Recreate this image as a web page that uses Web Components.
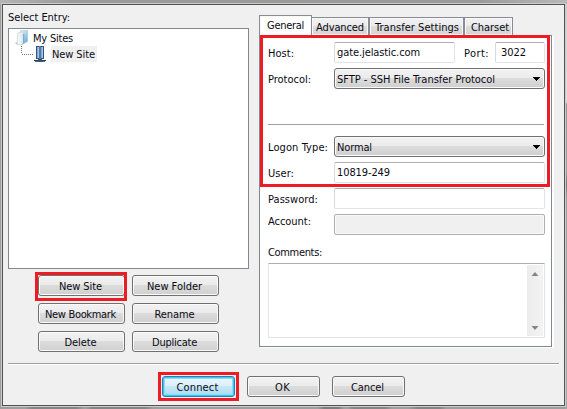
<!DOCTYPE html>
<html lang="en"><head><meta charset="utf-8"><title>Site Manager</title>
<style>
html,body{margin:0;height:100%;overflow:hidden}
body{font:11px/13px "DejaVu Sans Condensed","DejaVu Sans","Liberation Sans",sans-serif;font-stretch:condensed;color:#0a0a14}
</style></head><body>
<site-manager></site-manager>
<script>
const define=(name,html,init)=>{
  const tpl=document.createElement('template');tpl.innerHTML=html;
  customElements.define(name,class extends HTMLElement{
    connectedCallback(){
      if(this.shadowRoot)return;
      this.attachShadow({mode:'open'}).append(tpl.content.cloneNode(true));
      if(init)init.call(this,this.shadowRoot);
    }
  });
};

/* Text run whose tracking is tuned so that it fills the width given in "w". */
define('ui-text',`<style>:host{display:inline-block;white-space:nowrap;height:13px}span{display:inline-block}</style><span><slot></slot></span>`,
function(root){
  const s=root.querySelector('span'),w=+this.getAttribute('w'),n=this.textContent.length;
  const now=s.getBoundingClientRect().width;
  if(w&&now){s.style.letterSpacing=((w-now)/n)+'px';this.style.width=w+'px'}
});

define('ui-button',`<style>
:host{display:flex;box-sizing:border-box;position:relative;height:21px;border:1px solid #707070;border-radius:3px;justify-content:center;padding:4px 2px 0 0;
background:linear-gradient(#f2f2f2,#ebebeb 49%,#dcdcdc 50%,#cfcfcf);box-shadow:inset 0 0 0 1px #fafafa}
:host([primary]){border-color:#2d7fae;background:linear-gradient(#ecf6fc,#dceffa 49%,#c8e8f8 50%,#a9daf2);box-shadow:inset 0 0 0 1px #36c8f4,inset 0 0 0 2px #8bdcf6}
i{display:none}:host([marked]) i{display:block;position:absolute;border:3px solid #ed1c24;inset:-4px -3px -6px -4px;pointer-events:none}
:host([primary]) i{inset:-5px}
</style><slot></slot><i></i>`);

define('ui-input',`<style>
:host{display:block;box-sizing:border-box;height:21px;border:1px solid #e2e3ea;border-top-color:#abadb3;border-left-color:#d6dae2;border-radius:2px;background:#fff;padding:3px 0 0 2px}
:host([disabled]){background:#f0f0f0;border-color:#afafaf;box-shadow:inset 0 0 0 1px #fafafa}
</style><slot></slot>`);

define('ui-select',`<style>
:host{display:flex;justify-content:space-between;box-sizing:border-box;height:21px;border:1px solid #707070;border-radius:3px;padding:4px 4px 0 2px;
background:linear-gradient(#f2f2f2,#ebebeb 49%,#dcdcdc 50%,#cfcfcf);box-shadow:inset 0 0 0 1px #fafafa}
svg{display:block;margin-top:4px}
</style><slot></slot><svg width="7" height="4" shape-rendering="crispEdges"><path d="M0 0h7v1h-1v1h-1v1h-1v1h-1v-1h-1v-1h-1v-1h-1z" fill="#000"/></svg>`);

define('ui-rule',`<style>:host{display:block;height:1px;background:#a0a0a0;border-bottom:1px solid #fff}</style>`);

define('site-tree',`<style>
:host{display:block;box-sizing:border-box;width:241px;height:241px;border:1px solid #828790;background:#fff;padding:1px 0 0 6px}
.r{display:flex;height:16px}.r svg{flex:none;display:block}.t{padding:2px 0 0 4px}
.s{background:#f0f0f0;height:16px;box-sizing:border-box;padding:2px 2px 0 1px;margin-left:5px}
</style>
<div class="r"><svg width="14" height="16" viewBox="0 0 14 16"><defs><linearGradient id="a"><stop offset="0" stop-color="#fff"/><stop offset="1" stop-color="#d6e2ea"/></linearGradient><linearGradient id="b" x2="1" y2="1"><stop offset="0" stop-color="#e9f6fc"/><stop offset=".5" stop-color="#a5d3ef"/><stop offset="1" stop-color="#519bd0"/></linearGradient></defs>
<path d="M0 13l4-2.5V14l-2 1z" fill="#c3cdd2"/><path d="M5.5.7L12.500 .5v11L7 14.600z" fill="url(#b)" stroke="#a8bfce" stroke-width=".5"/><path d="M3 3l4-1.500 1.700 2v9L5.500 15 2 14.200z" fill="url(#a)" stroke="#b8c6cd" stroke-width=".6"/><path d="M8.700 4v9.200" stroke="#438dc4" stroke-width=".7"/></svg><span class="t"><ui-text w="40">My Sites</ui-text></span></div>
<div class="r"><svg width="31" height="16"><path d="M6.500 0v8M7 8.500h11" stroke="#777" stroke-dasharray="1 1" fill="none" shape-rendering="crispEdges"/>
<path d="M21 0h8v13h-8z" fill="#36537f"/><path d="M22 1h2v11h-2zM26 1h2v11h-2z" fill="#80a6d1"/><path d="M23 1h1v11h-1zM27 1h1v11h-1z" fill="#a9c8e6"/><path d="M24 0h2v13h-2z" fill="#5578a5"/><path d="M24 13h2v1h-2z" fill="#465f84"/><path d="M19 14h12v1h-12z" fill="#253d67"/><path d="M20 15h3v1h-3zM27 15h3v1h-3z" fill="#5a6c85"/><path d="M23 13h4v3h-4z" fill="#365178"/></svg><span class="s"><ui-text w="43">New Site</ui-text></span></div>`);

define('ui-tab',`<style>
:host{display:block;box-sizing:border-box;height:18px;border:1px solid #898c95;border-bottom:0;padding:3px 0 0 4px;background:linear-gradient(#f2f2f2,#ebebeb 49%,#dedede 50%,#d4d4d4);box-shadow:inset 0 0 0 1px #f8f8f8}
:host([active]){height:21px;background:#fff;padding:3px 0 0 7px;margin-bottom:-1px;position:relative}
</style><slot></slot>`);

define('site-settings',`<style>
:host{display:block;width:295px}
nav{display:flex;align-items:flex-end;height:20px}
.p{position:relative;box-sizing:border-box;width:293px;height:312px;border:1px solid #828790;background:#fff;box-shadow:1px 1px #fff,2px 1px #fff;padding:6px 6px 0 8px}
.g{display:grid;grid-template-columns:66px 121px 9px 31px 50px;row-gap:5px}
.w{grid-column:2/6}.l{padding-top:5px}
ui-rule{grid-column:1/6;margin:30px 1px 5px 0}
.c{margin:11px 0 4px}
.m{box-sizing:border-box;width:277px;height:75px;border:1px solid #e2e3ea;border-top-color:#abadb3;border-radius:1px;display:flex;justify-content:flex-end;padding:1px}
.b{box-sizing:border-box;width:16px;height:71px;background:linear-gradient(90deg,#ececec,#f3f3f3);display:flex;flex-direction:column;justify-content:space-between;align-items:center;padding:7px 0 6px}
.mark{position:absolute;box-sizing:border-box;left:0;top:-1px;width:290px;height:152px;border:3px solid #ed1c24;pointer-events:none}
</style>
<nav><ui-tab active style="width:53px"><ui-text w="37">General</ui-text></ui-tab><ui-tab style="width:58px;margin-left:-1px"><ui-text w="48">Advanced</ui-text></ui-tab><ui-tab style="width:95px;padding-left:5px"><ui-text w="84">Transfer Settings</ui-text></ui-tab><ui-tab style="width:49px;padding-left:6px"><ui-text w="38">Charset</ui-text></ui-tab></nav>
<div class="p"><div class="g">
<ui-text class="l" w="26">Host:</ui-text><ui-input><ui-text w="83">gate.jelastic.com</ui-text></ui-input><span></span><ui-text class="l" w="25">Port:</ui-text><ui-input style="padding-left:5px"><ui-text w="25">3022</ui-text></ui-input>
<ui-text class="l" w="43">Protocol:</ui-text><ui-select class="w"><ui-text w="158">SFTP - SSH File Transfer Protocol</ui-text></ui-select>
<ui-rule></ui-rule>
<ui-text class="l" w="60">Logon Type:</ui-text><ui-select class="w"><ui-text w="35">Normal</ui-text></ui-select>
<ui-text class="l" w="26">User:</ui-text><ui-input class="w"><ui-text w="53">10819-249</ui-text></ui-input>
<ui-text class="l" w="50">Password:</ui-text><ui-input class="w"></ui-input>
<ui-text w="43" style="padding-top:1px">Account:</ui-text><ui-input class="w" disabled></ui-input>
</div><div class="c"><ui-text w="54">Comments:</ui-text></div>
<div class="m"><div class="b"><svg width="8" height="4"><path d="M.5 4l3.500-4 3.500 4z" fill="#858585"/></svg><svg width="8" height="4"><path d="M.5 0h7L4 4z" fill="#858585"/></svg></div></div>
<div class="mark"></div></div>`);

define('site-manager',`<style>
:host{display:block;box-sizing:border-box;width:567px;height:409px;padding:4px 2px 3px 2px;background:
linear-gradient(90deg,transparent 25px,#858585 32px 76px,transparent 84px 86px,#858585 92px 145px,transparent 153px 318px,#7d7d7d 324px 338px,transparent 344px 348px,#858585 354px 385px,transparent 392px 408px,#858585 418px 440px,transparent 446px) 0 100%/100% 2px no-repeat,
linear-gradient(90deg,#b4b4b4,#9b9b9b 70px 480px,#b8b8b8) 0 0/100% 4px no-repeat,
linear-gradient(#d0d0d0,#e0e0e0 102px,#929292 104px,#a0a0a0 170px,#777 184px,#a0a0a0 200px,#a6a6a6) 100% 0/2px 100% no-repeat,
#9e9e9e}
main{box-sizing:border-box;width:563px;height:402px;border:1px solid #505454;background:#f0f0f0;padding:6px 5px 0;box-shadow:0 0 0 1px #cbcbcb}
.top{display:flex;height:352px}
.left{width:251px}
.cap{height:17px}
.btns{display:grid;grid-template-columns:87px 87px;gap:7px;margin:6px 0 0 30px}
.right{padding-top:4px}
.f{display:flex;gap:12px;margin:11px 0 0 154px}.f ui-button{width:73px}
</style><main><div class="top"><div class="left"><div class="cap"><ui-text w="62">Select Entry:</ui-text></div><site-tree></site-tree>
<div class="btns"><ui-button marked><ui-text w="43">New Site</ui-text></ui-button><ui-button><ui-text w="55">New Folder</ui-text></ui-button><ui-button><ui-text w="71">New Bookmark</ui-text></ui-button><ui-button><ui-text w="40">Rename</ui-text></ui-button><ui-button><ui-text w="32">Delete</ui-text></ui-button><ui-button><ui-text w="45">Duplicate</ui-text></ui-button></div></div>
<div class="right"><site-settings></site-settings></div></div>
<ui-rule></ui-rule>
<div class="f"><ui-button primary marked><ui-text w="42">Connect</ui-text></ui-button><ui-button><ui-text w="15">OK</ui-text></ui-button><ui-button><ui-text w="33">Cancel</ui-text></ui-button></div></main>`);
</script></body></html>
